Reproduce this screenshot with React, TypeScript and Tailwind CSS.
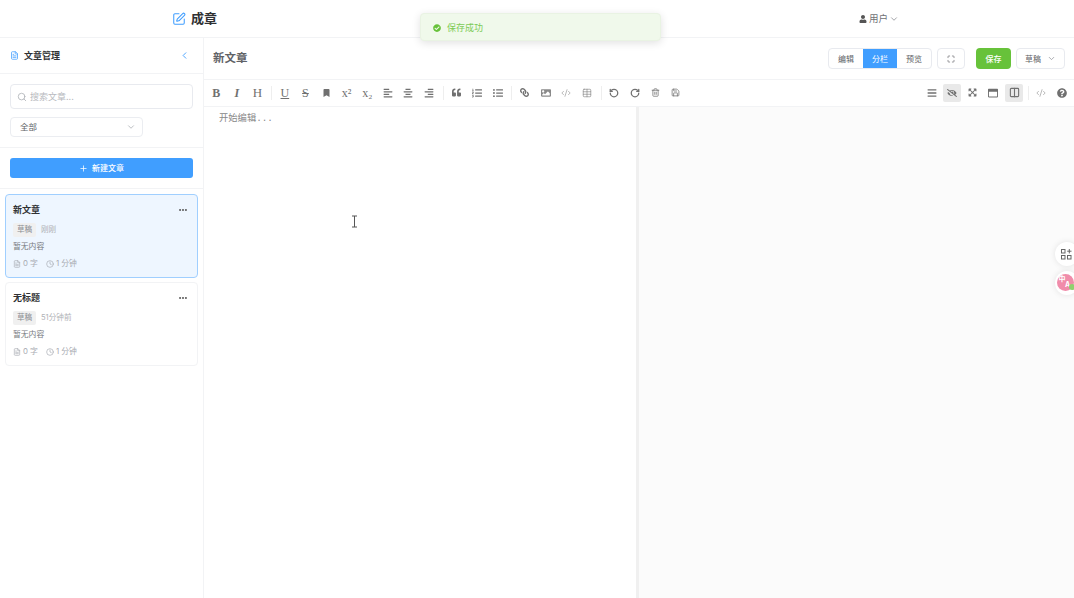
import React from "react";
import {
  FaBookmark, FaAlignLeft, FaAlignCenter, FaAlignRight, FaQuoteLeft, FaListOl, FaListUl, FaLink, FaImage,
  FaBars, FaEyeSlash, FaExpandArrowsAlt, FaRegWindowMaximize, FaQuestionCircle,
  FaUser, FaCheckCircle,
} from "react-icons/fa";
import { ChevronDown, ChevronLeft, Search, Plus, Ellipsis, FileText, Clock, Maximize, SquarePen, CodeXml, Table, RotateCcw, RotateCw, Trash2, Save, Columns2 } from "lucide-react";

const font = "font-['Inter','Noto_Sans_CJK_SC',sans-serif]";

function Tool({ children, active }: { children: React.ReactNode; active?: boolean }) {
  return (
    <div className={`w-[18px] h-[18px] mx-[1.3px] rounded-[2px] flex items-center justify-center text-[#707070] text-[10px] ${active ? "bg-[#e9e9e9]" : ""}`}>
      {children}
    </div>
  );
}
const Sep = () => <div className="w-px h-[14px] bg-[#eeeeee] ml-[3.6px] mr-[2.2px]" />;
const Serif = ({ children, cls = "" }: { children: React.ReactNode; cls?: string }) => (
  <span className={`font-['Liberation_Serif',serif] text-[12px] leading-none ${cls}`}>{children}</span>
);

function Card({ title, time, active }: { title: string; time: string; active?: boolean }) {
  return (
    <div className={`h-[84px] rounded-[4px] border px-[7px] pt-[7px] ${active ? "bg-[#eef6ff] border-[#a0cfff]" : "bg-white border-[#f2f3f5]"}`}>
      <div className="flex items-center justify-between h-[16px] pr-[2px]">
        <span className="text-[9px] font-bold text-[#303133]">{title}</span>
        <Ellipsis className="w-[10px] h-[10px] text-[#555]" strokeWidth={3} />
      </div>
      <div className="flex items-center gap-[5px] mt-[4px] h-[15px]">
        <span className="h-[14px] w-[23px] rounded-[2px] bg-[#f0f0f0] text-[7.6px] text-[#8a8c90] flex items-center justify-center">草稿</span>
        <span className="text-[7.6px] text-[#b0b2b6]">{time}</span>
      </div>
      <div className="text-[7.8px] text-[#777a80] mt-[2px] leading-[14px]">暂无内容</div>
      <div className="flex items-center mt-[3.5px] h-[14px] text-[7.8px] text-[#a8abb2]">
        <FileText className="w-[8px] h-[8px] mr-[2px]" />
        <span>0 字</span>
        <Clock className="w-[8px] h-[8px] ml-[8px] mr-[2px]" />
        <span>1 分钟</span>
      </div>
    </div>
  );
}

export default function App() {
  return (
    <div className={`relative w-[1074px] h-[598px] overflow-hidden bg-white flex flex-col ${font}`}>
      <header className="h-[38px] shrink-0 border-b border-[#f2f3f5] flex items-center justify-between pl-[172px] pr-[175px] pt-[1px]">
        <div className="flex items-center gap-[5px]">
          <SquarePen className="w-[14px] h-[14px] text-[#409eff]" strokeWidth={1.8} />
          <span className="text-[13px] font-bold text-[#303133]">成章</span>
        </div>
        <div className="flex items-center text-[9.5px] text-[#707276]">
          <FaUser className="w-[8px] h-[8px] mr-[2px] text-[#555]" />
          <span>用户</span>
          <ChevronDown className="w-[10px] h-[10px] ml-[1px] text-[#909399]" />
        </div>
      </header>
      <div className="flex-1 flex min-h-0">
        <aside className="w-[204px] shrink-0 border-r border-[#f2f3f5] flex flex-col">
          <div className="h-[36px] border-b border-[#f2f3f5] flex items-center justify-between pl-[10px] pr-[13px]">
            <div className="flex items-center gap-[5px]">
              <FileText className="w-[9px] h-[9px] text-[#409eff]" />
              <span className="text-[9px] font-bold text-[#303133]">文章管理</span>
            </div>
            <ChevronLeft className="w-[11px] h-[11px] text-[#409eff]" />
          </div>
          <div className="h-[74px] border-b border-[#f2f3f5] px-[10px] pt-[10px]">
            <div className="h-[25px] rounded-[4px] border border-[#e8eaef] flex items-center px-[6px]">
              <Search className="w-[10px] h-[10px] text-[#b0b3b8] mr-[3px]" />
              <span className="text-[9px] text-[#b8bac0]">搜索文章...</span>
            </div>
            <div className="w-[133px] h-[20px] mt-[8px] rounded-[4px] border border-[#ebedf1] flex items-center justify-between pl-[9px] pr-[6px]">
              <span className="text-[8.5px] text-[#606266]">全部</span>
              <ChevronDown className="w-[10px] h-[10px] text-[#b0b3b8]" />
            </div>
          </div>
          <div className="h-[41px] border-b border-[#f2f3f5] px-[10px] pt-[10px]">
            <div className="h-[20px] rounded-[3px] bg-[#409eff] text-white flex items-center justify-center gap-[4px] text-[8px] font-medium">
              <Plus className="w-[9px] h-[9px]" />
              <span>新建文章</span>
            </div>
          </div>
          <div className="flex flex-col gap-[4px] px-[5px] pt-[5px]">
            <Card title="新文章" time="刚刚" active />
            <Card title="无标题" time="51分钟前" />
          </div>
        </aside>
        <main className="flex-1 min-w-0 flex flex-col">
          <div className="h-[42px] shrink-0 border-b border-[#f2f3f5] flex items-center pl-[9px] pr-[9px]">
            <span className="text-[11.5px] font-bold text-[#606266]">新文章</span>
            <div className="ml-auto flex items-center">
              <div className="flex h-[21px] rounded-[4px] border border-[#e8eaef] text-[8px] text-[#606266] overflow-hidden">
                <span className="w-[34px] flex items-center justify-center">编辑</span>
                <span className="w-[34px] flex items-center justify-center bg-[#409eff] text-white">分栏</span>
                <span className="w-[34px] flex items-center justify-center">预览</span>
              </div>
              <div className="ml-[5px] w-[28px] h-[21px] rounded-[4px] border border-[#e8eaef] flex items-center justify-center">
                <Maximize className="w-[8px] h-[8px] text-[#606266]" />
              </div>
              <div className="ml-[11px] w-[35px] h-[21px] rounded-[4px] bg-[#67c23a] text-white text-[8px] font-medium flex items-center justify-center">保存</div>
              <div className="ml-[5px] w-[49px] h-[21px] rounded-[4px] border border-[#e8eaef] text-[8px] text-[#606266] flex items-center justify-center gap-[6px]">
                <span>草稿</span>
                <ChevronDown className="w-[9px] h-[9px] text-[#909399]" />
              </div>
            </div>
          </div>
          <div className="h-[27px] shrink-0 border-b border-[#f2f3f5] flex items-center pl-[2px] pr-[1.7px] pb-[1px]">
            <Tool><Serif cls="font-bold">B</Serif></Tool>
            <Tool><Serif cls="italic font-bold">I</Serif></Tool>
            <Tool><Serif cls="text-[13px]">H</Serif></Tool>
            <Sep />
            <Tool><Serif cls="underline">U</Serif></Tool>
            <Tool><Serif cls="line-through">S</Serif></Tool>
            <Tool><FaBookmark className="w-[7px] h-[8px]" /></Tool>
            <Tool><Serif cls="text-[9px]">x²</Serif></Tool>
            <Tool><Serif cls="text-[9px]">x₂</Serif></Tool>
            <Tool><FaAlignLeft /></Tool>
            <Tool><FaAlignCenter /></Tool>
            <Tool><FaAlignRight /></Tool>
            <Sep />
            <Tool><FaQuoteLeft className="w-[9px] h-[9px]" /></Tool>
            <Tool><FaListOl /></Tool>
            <Tool><FaListUl /></Tool>
            <Sep />
            <Tool><FaLink className="w-[9px] h-[9px] -scale-x-100" /></Tool>
            <Tool><FaImage className="text-[#8a8a8a]" /></Tool>
            <Tool><CodeXml className="w-[10px] h-[10px] text-[#909090]" strokeWidth={1.5} /></Tool>
            <Tool><Table className="w-[10px] h-[10px] text-[#808080]" strokeWidth={1.5} /></Tool>
            <Sep />
            <Tool><RotateCcw className="w-[10px] h-[10px]" strokeWidth={3} /></Tool>
            <Tool><RotateCw className="w-[10px] h-[10px]" strokeWidth={3} /></Tool>
            <Tool><Trash2 className="w-[9px] h-[9px]" strokeWidth={2} /></Tool>
            <Tool><Save className="w-[9px] h-[9px]" strokeWidth={2} /></Tool>
            <div className="ml-auto flex items-center">
              <Tool><FaBars /></Tool>
              <Tool active><FaEyeSlash /></Tool>
              <Tool><FaExpandArrowsAlt className="w-[9px] h-[9px]" /></Tool>
              <Tool><FaRegWindowMaximize /></Tool>
              <Tool active><Columns2 className="w-[11px] h-[11px]" strokeWidth={2.4} /></Tool>
              <Sep />
              <Tool><CodeXml className="w-[10px] h-[10px] text-[#909090]" strokeWidth={1.5} /></Tool>
              <Tool><FaQuestionCircle /></Tool>
            </div>
          </div>
          <div className="flex-1 flex min-h-0">
            <div className="w-[432px] shrink-0 pl-[15px] pt-[5px] text-[9.3px] text-[#888] leading-[14px] font-['Liberation_Mono','Noto_Sans_CJK_SC',monospace]">开始编辑...</div>
            <div className="w-[3px] bg-[#f0f0f0]" />
            <div className="flex-1 bg-[#fbfbfb]" />
          </div>
        </main>
      </div>
      <div className="absolute left-[420px] top-[13px] w-[241px] h-[28px] pt-[1px] rounded-[4px] bg-[#f0f9eb] border border-[#e9f3e3] shadow-[0_2px_8px_rgba(0,0,0,0.12)] flex items-center pl-[12px] gap-[6px]">
        <FaCheckCircle className="w-[8px] h-[8px] text-[#67c23a]" />
        <span className="text-[9px] text-[#7ccb55]">保存成功</span>
      </div>
      <svg className="absolute left-[349px] top-[215px]" width="11" height="13" viewBox="0 0 11 13" fill="none" stroke="#555" strokeWidth="1">
        <path d="M3 1h5M3 12h5M5.5 1v11" />
      </svg>
      <div className="absolute left-[1055px] top-[242px] w-[24px] h-[24px] rounded-full bg-white shadow-[0_0_6px_rgba(0,0,0,0.1)]">
        <svg className="absolute left-[6px] top-[7px]" width="11" height="11" viewBox="0 0 11 11" fill="none" stroke="#666" strokeWidth="1">
          <rect x="0.5" y="0.5" width="3.5" height="3.5" />
          <rect x="0.5" y="6.5" width="3.5" height="3.5" />
          <rect x="6.5" y="6.5" width="3.5" height="3.5" />
          <path d="M6.2 2.2h4.3M8.3 0v4.4" />
        </svg>
      </div>
      <div className="absolute left-[1055px] top-[271px] w-[24px] h-[24px] rounded-full bg-white shadow-[0_0_6px_rgba(0,0,0,0.1)]">
        <div className="absolute left-[2px] top-[3px] w-[17px] h-[17px] rounded-full bg-[#f08caa] text-white font-bold">
          <span className="absolute left-[1.5px] top-[1px] text-[7px] leading-[8px]">中</span>
          <span className="absolute left-[8px] top-[7px] text-[7px] leading-[8px]">A</span>
          <div className="absolute -right-[1px] bottom-[1px] w-[6px] h-[6px] rounded-full bg-[#8fd16f]" />
        </div>
      </div>
    </div>
  );
}
